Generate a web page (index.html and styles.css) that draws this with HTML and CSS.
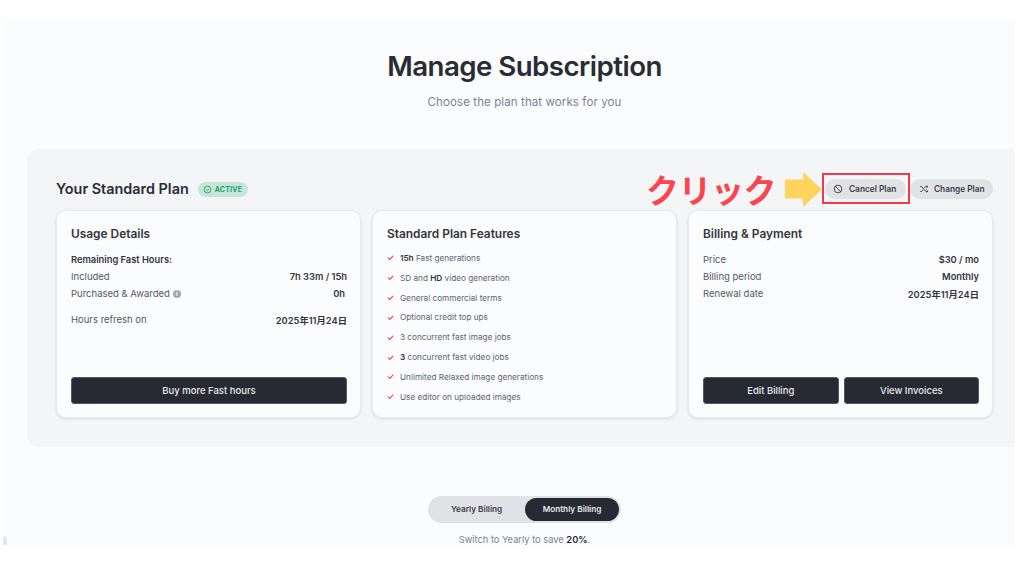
FILE: index.html
```html
<!DOCTYPE html>
<html lang="ja">
<head>
<meta charset="utf-8">
<title>Manage Subscription</title>
<link rel="stylesheet" href="styles.css">
</head>
<body>
<main class="frame">
  <span class="corner"></span>
  <header class="hero">
    <h1>Manage Subscription</h1>
    <p>Choose the plan that works for you</p>
  </header>
  <section class="panel">
    <div class="panel-head">
      <div class="plan-title">
        <h2>Your Standard Plan</h2>
        <span class="badge">
          <svg viewBox="0 0 12 12" class="badge-icon"><circle cx="6" cy="6" r="4.6"/><path d="M4 6.2 5.4 7.4 8 5"/></svg>
          ACTIVE
        </span>
      </div>
      <div class="actions">
        <button class="pill cancel">
          <svg viewBox="0 0 12 12" class="pill-icon"><circle cx="6" cy="6" r="4.6"/><path d="M2.8 2.8 9.2 9.2"/></svg>
          Cancel Plan
        </button>
        <button class="pill change">
          <svg viewBox="0 0 12 12" class="pill-icon"><path d="M1.5 3.2H3.4L8 8.8H10.5M1.5 8.8H3.4L5 6.9M6.5 5 8 3.2H10.5M9 1.8 10.5 3.2 9 4.6M9 7.4 10.5 8.8 9 10.2"/></svg>
          Change Plan
        </button>
      </div>
    </div>
    <div class="cards">
      <article class="card">
        <h3>Usage Details</h3>
        <div class="rows">
          <div class="row strong-label"><span>Remaining Fast Hours:</span></div>
          <div class="row"><span>Included</span><b>7h 33m / 15h</b></div>
          <div class="row"><span class="with-info">Purchased &amp; Awarded <i class="info">i</i></span><b class="inset">0h</b></div>
          <div class="row row-gap"><span>Hours refresh on</span><b>2025年11月24日</b></div>
        </div>
        <div class="card-actions"><button class="dark">Buy more Fast hours</button></div>
      </article>
      <article class="card">
        <h3>Standard Plan Features</h3>
        <ul class="features">
          <li><svg viewBox="0 0 10 10" class="check"><path d="M1.2 5 4 7.8 8.8 2.6"/></svg><span><b>15h</b> Fast generations</span></li>
          <li><svg viewBox="0 0 10 10" class="check"><path d="M1.2 5 4 7.8 8.8 2.6"/></svg><span>SD and <b>HD</b> video generation</span></li>
          <li><svg viewBox="0 0 10 10" class="check"><path d="M1.2 5 4 7.8 8.8 2.6"/></svg><span>General commercial terms</span></li>
          <li><svg viewBox="0 0 10 10" class="check"><path d="M1.2 5 4 7.8 8.8 2.6"/></svg><span>Optional credit top ups</span></li>
          <li><svg viewBox="0 0 10 10" class="check"><path d="M1.2 5 4 7.8 8.8 2.6"/></svg><span>3 concurrent fast image jobs</span></li>
          <li><svg viewBox="0 0 10 10" class="check"><path d="M1.2 5 4 7.8 8.8 2.6"/></svg><span><b>3</b> concurrent fast video jobs</span></li>
          <li><svg viewBox="0 0 10 10" class="check"><path d="M1.2 5 4 7.8 8.8 2.6"/></svg><span>Unlimited Relaxed image generations</span></li>
          <li><svg viewBox="0 0 10 10" class="check"><path d="M1.2 5 4 7.8 8.8 2.6"/></svg><span>Use editor on uploaded images</span></li>
        </ul>
      </article>
      <article class="card">
        <h3>Billing &amp; Payment</h3>
        <div class="rows">
          <div class="row"><span>Price</span><b>$30 / mo</b></div>
          <div class="row"><span>Billing period</span><b>Monthly</b></div>
          <div class="row"><span>Renewal date</span><b>2025年11月24日</b></div>
        </div>
        <div class="card-actions"><button class="dark">Edit Billing</button><button class="dark">View Invoices</button></div>
      </article>
    </div>
  </section>
  <div class="billing">
    <div class="toggle">
      <span class="opt">Yearly Billing</span>
      <span class="opt on">Monthly Billing</span>
    </div>
    <p class="save">Switch to Yearly to save <b>20%</b>.</p>
  </div>
  <div class="note">
    <span class="note-text">クリック</span>
    <svg viewBox="0 0 37 35" class="note-arrow"><path d="M0 7.5H18V0L37 17.5 18 35V26.5H0Z"/></svg>
    <span class="note-box"></span>
  </div>
</main>
</body>
</html>
```

FILE: styles.css
```css
* { box-sizing: border-box; }
html, body { margin: 0; height: 100%; }
body {
  background: #fff;
  font-family: Inter, "Noto Sans CJK JP", sans-serif;
  color: #2a2c33;
  overflow: hidden;
}
.frame {
  position: relative;
  margin: 20px 2px 0 3px;
  height: 525px;
  background: #fbfcfe;
  overflow: hidden;
  padding-top: 29px;
}
.corner {
  position: absolute;
  left: 0;
  bottom: 0;
  width: 4px;
  height: 9px;
  background: #e6e7ea;
  border-top-right-radius: 4px;
}
.hero { text-align: center; height: 100px; padding-left: 31px; }
.hero h1 {
  margin: 0;
  font-size: 27.7px;
  line-height: 35px;
  font-weight: 600;
  letter-spacing: -0.55px;
  color: #2a2c33;
}
.hero p {
  margin: 10px 0 0;
  font-size: 11.5px;
  line-height: 16px;
  color: #7d8290;
  letter-spacing: 0.1px;
}
.panel {
  margin-left: 24px;
  height: 298px;
  background: #f4f5f7;
  border-radius: 12px 0 0 12px;
  padding: 29px 22px 0 29px;
}
.panel-head {
  display: flex;
  justify-content: space-between;
  align-items: center;
  height: 21px;
}
.plan-title { display: flex; align-items: center; gap: 9px; }
.plan-title h2 {
  margin: 0;
  font-size: 14.4px;
  line-height: 20px;
  font-weight: 600;
}
.badge {
  display: flex;
  align-items: center;
  gap: 3px;
  width: 50px;
  height: 15px;
  padding: 0 0 0 5px;
  border-radius: 8px;
  background: #c6e6da;
  color: #1e9d70;
  font-size: 7px;
  font-weight: 700;
  letter-spacing: 0.2px;
  margin-top: 1px;
}
.badge-icon {
  width: 9px;
  height: 9px;
  fill: none;
  stroke: #1e9d70;
  stroke-width: 1.1;
}
.actions { display: flex; gap: 4px; }
.pill {
  display: flex;
  align-items: center;
  gap: 6px;
  height: 20px;
  padding: 0 0 0 8px;
  border: 0;
  border-radius: 10px;
  background: #e1e2e6;
  color: #3c3e46;
  font: 600 8.3px Inter, sans-serif;
}
.cancel { width: 81px; }
.change { width: 83px; padding-left: 9px; gap: 5px; }
.pill-icon {
  width: 10px;
  height: 10px;
  flex: none;
  fill: none;
  stroke: #2a2c33;
  stroke-width: 1;
}
.cards {
  display: grid;
  grid-template-columns: repeat(3, 305px);
  gap: 11px;
  margin-top: 11px;
}
.card {
  display: flex;
  flex-direction: column;
  height: 208px;
  padding: 14px 13px 13px 14px;
  background: #fbfcfe;
  border: 1px solid #e9eaed;
  border-radius: 10px;
  box-shadow: 0 1px 3px rgba(40, 44, 55, 0.12);
}
.card h3 {
  margin: 0 0 6px;
  font-size: 11.9px;
  line-height: 17px;
  font-weight: 600;
  color: #33353c;
}
.rows { display: flex; flex-direction: column; margin-top: 3px; }
.row {
  display: flex;
  justify-content: space-between;
  align-items: center;
  height: 17px;
  font-size: 9.5px;
  color: #555863;
}
.row b { font-weight: 600; color: #33353c; font-size: 9.3px; }
.row .inset { margin-right: 2px; }
.strong-label { font-weight: 600; color: #33353c; font-size: 9.3px; }
.row-gap { margin-top: 9px; }
.with-info { display: flex; align-items: center; gap: 3px; }
.info {
  display: inline-flex;
  align-items: center;
  justify-content: center;
  width: 8px;
  height: 8px;
  border-radius: 50%;
  background: #a3a6ae;
  color: #fbfcfe;
  font: 700 6px Inter, sans-serif;
}
.card-actions { display: flex; gap: 5px; margin-top: auto; }
.dark {
  flex: 1;
  height: 27px;
  border: 1px solid #555862;
  border-radius: 3px;
  background: #272a32;
  color: #e8e9ec;
  font: 500 9.5px Inter, sans-serif;
}
.features {
  list-style: none;
  margin: 0;
  padding: 0;
  display: flex;
  flex-direction: column;
}
.features li {
  display: flex;
  align-items: center;
  gap: 6px;
  height: 19.85px;
  font-size: 8.2px;
  color: #60636e;
}
.features b { font-weight: 600; color: #33353c; }
.check {
  width: 7px;
  height: 7px;
  fill: none;
  stroke: #f5404c;
  stroke-width: 1.5;
  flex: none;
}
.billing {
  display: flex;
  flex-direction: column;
  align-items: center;
  margin-top: 49px;
  padding-left: 31px;
}
.toggle {
  display: flex;
  align-items: center;
  justify-content: space-between;
  width: 193px;
  height: 27px;
  padding: 0 2px 0 23px;
  border-radius: 14px;
  background: #e1e2e6;
}
.opt { font-size: 8.2px; font-weight: 600; color: #3a3c44; padding-bottom: 1px; }
.opt.on {
  display: flex;
  align-items: center;
  justify-content: center;
  width: 94px;
  height: 23px;
  border-radius: 12px;
  background: #272a32;
  color: #e8e9ec;
}
.save {
  margin: 10px 0 0;
  font-size: 9.3px;
  line-height: 14px;
  color: #7d8290;
}
.save b { font-weight: 600; color: #2a2c33; }
.note { position: absolute; inset: 0; pointer-events: none; }
.note-text {
  position: absolute;
  left: 643px;
  top: 149px;
  font: 700 33px/40px "Noto Sans CJK JP", sans-serif;
  color: #fb4450;
  letter-spacing: -0.5px;
}
.note-arrow {
  position: absolute;
  left: 782px;
  top: 152px;
  width: 37px;
  height: 35px;
  fill: #fed45c;
}
.note-box {
  position: absolute;
  left: 819px;
  top: 153px;
  width: 88px;
  height: 31px;
  border: 2.5px solid #f0394a;
}
```
